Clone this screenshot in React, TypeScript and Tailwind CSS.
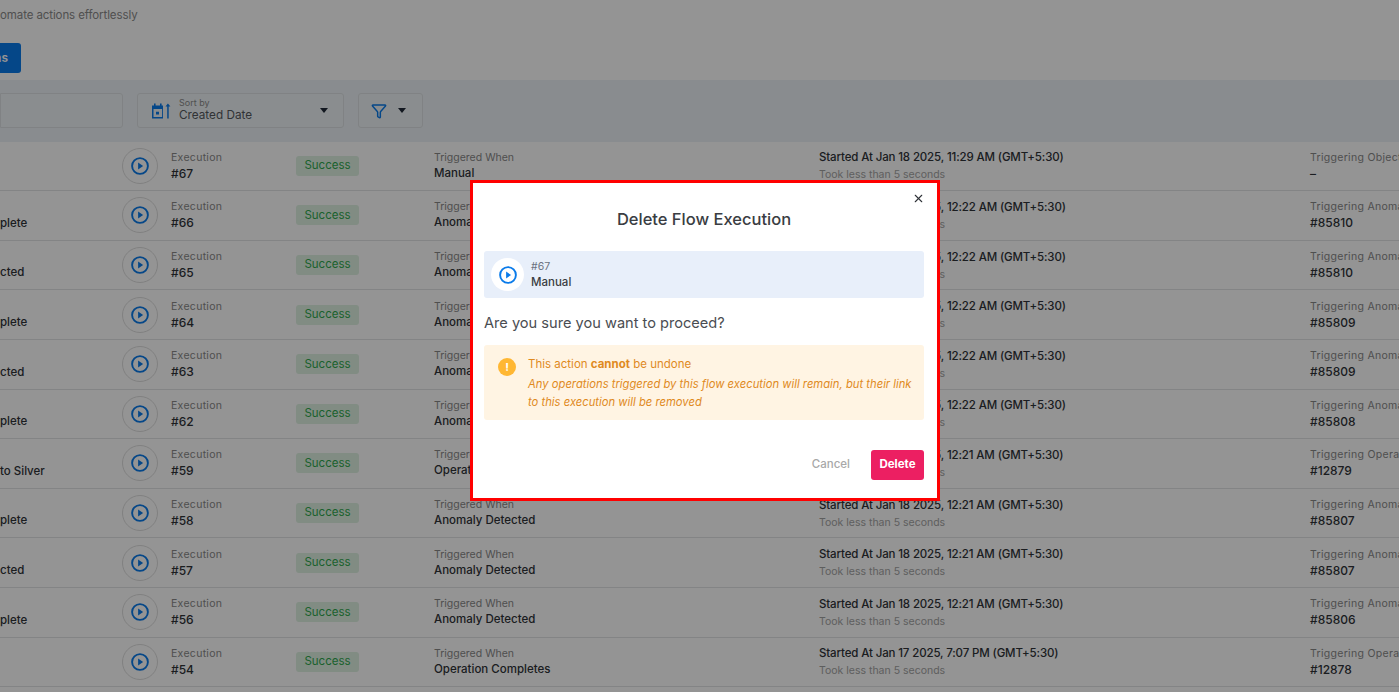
import { X, Funnel } from 'lucide-react';

type Row = {
  id: number;
  name: string;
  trigger: string;
  started: string;
  objectLabel: string;
  objectValue: string;
};

const rows: Row[] = [
  { id: 67, name: '', trigger: 'Manual', started: 'Jan 18 2025, 11:29 AM', objectLabel: 'Triggering Object', objectValue: '–' },
  { id: 66, name: 'plete', trigger: 'Anomaly Detected', started: 'Jan 18 2025, 12:22 AM', objectLabel: 'Triggering Anomaly', objectValue: '#85810' },
  { id: 65, name: 'cted', trigger: 'Anomaly Detected', started: 'Jan 18 2025, 12:22 AM', objectLabel: 'Triggering Anomaly', objectValue: '#85810' },
  { id: 64, name: 'plete', trigger: 'Anomaly Detected', started: 'Jan 18 2025, 12:22 AM', objectLabel: 'Triggering Anomaly', objectValue: '#85809' },
  { id: 63, name: 'cted', trigger: 'Anomaly Detected', started: 'Jan 18 2025, 12:22 AM', objectLabel: 'Triggering Anomaly', objectValue: '#85809' },
  { id: 62, name: 'plete', trigger: 'Anomaly Detected', started: 'Jan 18 2025, 12:22 AM', objectLabel: 'Triggering Anomaly', objectValue: '#85808' },
  { id: 59, name: 'to Silver', trigger: 'Operation Completes', started: 'Jan 18 2025, 12:21 AM', objectLabel: 'Triggering Operation', objectValue: '#12879' },
  { id: 58, name: 'plete', trigger: 'Anomaly Detected', started: 'Jan 18 2025, 12:21 AM', objectLabel: 'Triggering Anomaly', objectValue: '#85807' },
  { id: 57, name: 'cted', trigger: 'Anomaly Detected', started: 'Jan 18 2025, 12:21 AM', objectLabel: 'Triggering Anomaly', objectValue: '#85807' },
  { id: 56, name: 'plete', trigger: 'Anomaly Detected', started: 'Jan 18 2025, 12:21 AM', objectLabel: 'Triggering Anomaly', objectValue: '#85806' },
  { id: 54, name: '', trigger: 'Operation Completes', started: 'Jan 17 2025, 7:07 PM', objectLabel: 'Triggering Operation', objectValue: '#12878' },
];

function PlayIcon({ className }: { className: string }) {
  return (
    <svg viewBox="0 0 18 18" className={className} fill="none">
      <circle cx="9" cy="9" r="7.9" stroke="currentColor" strokeWidth="1.9" />
      <path d="M7.1 5.6v6.8l5-3.4z" fill="currentColor" />
    </svg>
  );
}

function SortDateIcon() {
  return (
    <svg viewBox="0 0 20 16" className="h-[16px] w-[20px] text-[#0a7bea]" fill="currentColor">
      <path d="M1 2.5h2V0.5h1.6v2h4.4V0.5h1.6v2h1.4v13H1zM2.5 6v8h8.6V6zM5 8.8h3v2.6H5z" fillRule="evenodd" />
      <path d="M16.2 15.5V3.4h-1.7L16.9.4l2.5 3h-1.7v12.1z" />
    </svg>
  );
}

function Caret() {
  return <span className="h-0 w-0 border-x-[4.5px] border-t-[5px] border-x-transparent border-t-[#1f2937]" />;
}

function ExecutionRow({ row }: { row: Row }) {
  return (
    <div className="flex h-[49.6px] shrink-0 items-center whitespace-nowrap border-b border-[#e2e4e6]">
      <div className="w-[122px] shrink-0 pt-[16px] text-[11.5px] font-medium text-[#2f3338]">{row.name}</div>
      <div className="grid h-[36px] w-[36px] shrink-0 place-items-center rounded-full border border-[#dddddd]">
        <PlayIcon className="h-[18px] w-[18px] text-[#0a7bea]" />
      </div>
      <div className="ml-[13px] w-[125px] shrink-0">
        <div className="text-[10.5px] leading-[15px] tracking-[0.3px] text-[#888888]">Execution</div>
        <div className="text-[12px] leading-[17px] font-medium text-[#2f3338]">#{row.id}</div>
      </div>
      <div className="grid h-[20px] w-[63px] shrink-0 place-items-center rounded-[3px] bg-[#dff1e2] text-[11.5px] text-[#2fa84f]">
        Success
      </div>
      <div className="ml-[75px] w-[385px] shrink-0">
        <div className="text-[10.5px] leading-[15px] text-[#888888]">Triggered When</div>
        <div className="text-[11.5px] leading-[17px] font-medium text-[#2f3338]">{row.trigger}</div>
      </div>
      <div className="w-[491px] shrink-0">
        <div className="text-[11.5px] leading-[17px] font-medium tracking-[-0.14px] text-[#2f3338]">Started At {row.started} (GMT+5:30)</div>
        <div className="mt-[1px] text-[10.5px] leading-[15px] text-[#a3a3a3]">Took less than 5 seconds</div>
      </div>
      <div className="shrink-0">
        <div className="text-[10.5px] leading-[15px] tracking-[0.3px] text-[#888888]">{row.objectLabel}</div>
        <div className="text-[12px] leading-[17px] font-medium text-[#2f3338]">{row.objectValue}</div>
      </div>
    </div>
  );
}

function DeleteDialog() {
  return (
    <div className="absolute left-[470px] top-[180px] flex h-[321px] w-[470px] flex-col border-[3px] border-[#ff0000] bg-white pl-[11px] pr-[13px]">
      <button className="absolute right-[12px] top-[9px] text-[#2f3338]">
        <X className="h-[13px] w-[13px]" strokeWidth={2} />
      </button>
      <h2 className="mt-[24px] text-center text-[16.5px] leading-[24px] font-medium text-[#3a3d42]">Delete Flow Execution</h2>
      <div className="mt-[20px] flex h-[47px] items-center gap-[7px] rounded-[3px] bg-[#e8effa] px-[7px]">
        <div className="grid h-[33px] w-[33px] place-items-center rounded-full bg-white">
          <PlayIcon className="h-[18px] w-[18px] text-[#0a7bea]" />
        </div>
        <div>
          <div className="text-[10.5px] leading-[14px] text-[#6b7280]">#67</div>
          <div className="text-[11.5px] leading-[16px] font-medium text-[#3a3d42]">Manual</div>
        </div>
      </div>
      <p className="mt-[14px] text-[14.6px] leading-[22px] text-[#4a4d52]">Are you sure you want to proceed?</p>
      <div className="mt-[11px] flex h-[75px] rounded-[3px] bg-[#fff4e3] pl-[14px] pt-[11px]">
        <div className="mt-[2px] grid h-[18px] w-[18px] shrink-0 place-items-center rounded-full bg-[#ffb733] text-[11px] leading-none font-bold text-white">
          !
        </div>
        <div className="ml-[12px] text-[#e08a1e]">
          <div className="text-[11.5px] leading-[16px]">
            This action <span className="font-bold">cannot</span> be undone
          </div>
          <div className="mt-[3px] text-[11.25px] leading-[18px] italic">
            Any operations triggered by this flow execution will remain, but their link to this execution will be removed
          </div>
        </div>
      </div>
      <div className="mt-[30px] flex items-center justify-end gap-[21px]">
        <button className="text-[11.5px] font-medium text-[#a8a8a8]">Cancel</button>
        <button className="h-[30px] w-[53px] rounded-[3px] bg-[#ec1f62] text-[11.5px] font-bold text-white">Delete</button>
      </div>
    </div>
  );
}

export default function App() {
  return (
    <div className="relative h-[692px] w-[1399px] overflow-hidden bg-white font-['Inter','Liberation_Sans',sans-serif]">
      <div className="pt-[7px] text-[11.5px] leading-[16px] tracking-[-0.1px] whitespace-nowrap text-[#8a8a8a]">omate actions effortlessly</div>
      <div className="mt-[20px] flex h-[30px] w-[21px] items-center justify-end overflow-hidden rounded-r-[3px] bg-[#0a7bea] pr-[13px] text-[12px] font-semibold text-white">
        <span className="shrink-0">ns</span>
      </div>
      <div className="mt-[7px] flex h-[61.6px] items-center bg-[#ecf2f6]">
        <div className="h-[35px] w-[123px] rounded-r-[3px] border border-[#dde1e4] bg-[#eef3f6]" />
        <div className="ml-[14px] flex h-[35px] w-[207px] items-center rounded-[3px] border border-[#dde1e4] bg-[#eef3f6] pl-[13px] pr-[15px]">
          <SortDateIcon />
          <div className="ml-[8px] flex-1">
            <div className="text-[9px] leading-[10px] text-[#8a8a8a]">Sort by</div>
            <div className="text-[11.75px] leading-[15px] text-[#55595e]">Created Date</div>
          </div>
          <Caret />
        </div>
        <div className="ml-[14px] flex h-[35px] w-[65px] items-center gap-[11px] rounded-[3px] border border-[#dde1e4] bg-[#eef3f6] pl-[12px]">
          <Funnel className="h-[16px] w-[16px] text-[#0a7bea]" strokeWidth={2.2} />
          <Caret />
        </div>
      </div>
      <div className="flex flex-col">
        {rows.map((row) => (
          <ExecutionRow key={row.id} row={row} />
        ))}
      </div>
      <div className="absolute inset-0 bg-black/[0.42]" />
      <DeleteDialog />
    </div>
  );
}
